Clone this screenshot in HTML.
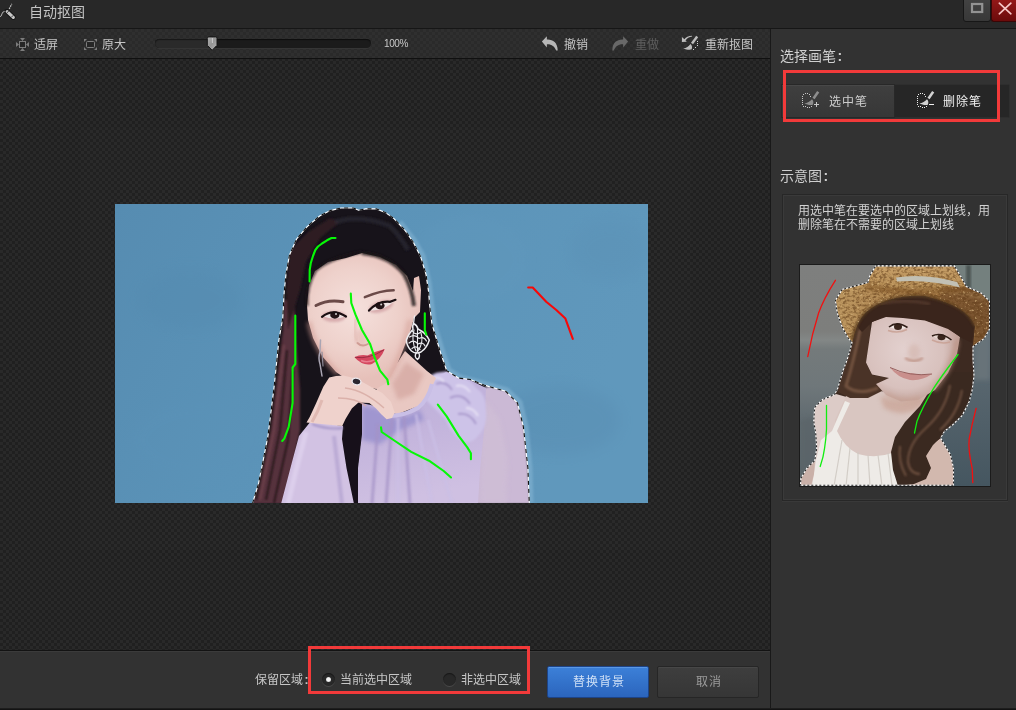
<!DOCTYPE html>
<html lang="zh-CN">
<head>
<meta charset="utf-8">
<title>自动抠图</title>
<style>
*{box-sizing:border-box;margin:0;padding:0}
html,body{width:1016px;height:710px;overflow:hidden;background:#2b2b2b}
body{position:relative;font-family:"Liberation Sans","Noto Sans CJK SC",sans-serif;color:#d0d0d0;font-size:12px}
.abs{position:absolute}
#wrap{position:absolute;left:0;top:0;width:1016px;height:710px;will-change:transform}
#title{left:0;top:0;width:1016px;height:29px;background:#282828;border-bottom:1px solid #161616}
#title .t{left:29px;top:2px;font-size:14px;color:#c4c4c4;line-height:20px;letter-spacing:0}
#tool{left:0;top:29px;width:770px;height:30px;border-bottom:1px solid #101010;
 background-color:#2a2a2a;
 background-image:conic-gradient(#2f2f2f 25%,#2a2a2a 0 50%,#2f2f2f 0 75%,#2a2a2a 0);background-size:6px 6px}
#canvas{left:0;top:59px;width:770px;height:591px;
 background-color:#222;
 background-image:conic-gradient(#292929 25%,#202020 0 50%,#292929 0 75%,#202020 0);background-size:6px 6px;background-position:3px 5px}
#inner{left:80px;top:128px;width:611px;height:422px;background:rgba(255,255,255,.009)}
#bottom{left:0;top:650px;width:770px;height:60px;background:#323232;border-top:1px solid #131313;box-shadow:inset 0 1px 0 #3b3b3b}
#side{left:770px;top:29px;width:246px;height:681px;background:#323232;border-left:1px solid #191919}
.tl{font-size:12px;color:#c8c8c8;line-height:16px;white-space:nowrap}

.ti{font-size:12px;line-height:16px;color:#c6c6c6;white-space:nowrap}
.dim{color:#5e5e5e}
#track{left:155px;top:39px;width:216px;height:9px;border-radius:5px;background:#1b1b1b;box-shadow:inset 0 1px 1px #0e0e0e,0 1px 0 #353535}
#trackL{left:155px;top:39px;width:57px;height:9px;border-radius:5px 0 0 5px;background:#2a2a2a;box-shadow:inset 0 1px 1px #171717}
#pct{left:384px;top:37px;letter-spacing:-.4px;font-size:10px;line-height:14px;color:#c8c8c8;font-family:"Liberation Sans",sans-serif}
#maxb{left:963px;top:-1px;width:28px;height:23px;background:linear-gradient(#424242,#383838);border:1px solid #171717;border-radius:0 0 3px 3px}
#clsb{left:991px;top:-1px;width:26px;height:23px;background:linear-gradient(#931818,#6b0b0b);border:1px solid #3a0606;border-right:0;border-radius:0 0 0 3px}
.col{font-weight:700;margin-left:1.500px;font-family:"Liberation Sans",sans-serif}
.h14{font-size:14px;line-height:18px;color:#cfcfcf;white-space:nowrap}
#redA{left:783px;top:70px;width:217px;height:52px;border:3px solid #f23a3a}
#redB{left:308px;top:646px;width:222px;height:48px;border:3px solid #f23a3a}
#btnSel{left:781px;top:84px;width:114px;height:34px;background:linear-gradient(#3f3f3f,#373737);border:1px solid #282828;box-shadow:inset 0 1px 0 #484848}
#btnDel{left:895px;top:84px;width:115px;height:34px;background:#262626;border:1px solid #2e2e2e;border-left:0;border-radius:0 2px 2px 0}
.bt{font-size:12px;letter-spacing:1px;line-height:16px;white-space:nowrap}
#demo{left:782px;top:194px;width:226px;height:307px;border:1px solid #272727;background:#323232;box-shadow:inset 0 0 0 1px #3a3a3a,0 1px 0 #393939}
#demoTxt{left:798px;top:204px;font-size:12px;line-height:14px;color:#d2d2d2;white-space:nowrap}
.radio{width:13px;height:13px;border-radius:50%;background:#282828;box-shadow:inset 0 1px 1px #161616,0 1px 0 #4a4a4a}
.radio i{position:absolute;left:4px;top:4px;width:5px;height:5px;border-radius:50%;background:radial-gradient(#f4f4f4 40%,#b0b0b0)}
#ok{left:547px;top:666px;width:102px;height:32px;background:linear-gradient(#3c80d8,#2b65bd);border:1px solid #1d4488;border-radius:2px;box-shadow:inset 0 1px 0 #5a97e4}
#cancel{left:657px;top:666px;width:102px;height:32px;background:linear-gradient(#3e3e3e,#363636);border:1px solid #262626;border-radius:2px;box-shadow:inset 0 1px 0 #474747}
#botline{left:0;top:708px;width:1016px;height:2px;background:linear-gradient(#222,#0e0e0e)}
</style>
</head>
<body>
<div id="wrap">
<div id="title" class="abs"><div class="abs t">自动抠图</div></div>
<div id="tool" class="abs"></div>
<div id="canvas" class="abs"></div>
<div id="inner" class="abs"></div>
<!--PHOTO1-->
<svg class="abs" style="left:115px;top:204px" width="533" height="299" viewBox="115 204 533 299">
<defs>
 <linearGradient id="p1bg" x1="0" x2="1" y1="0" y2="0.3"><stop offset="0" stop-color="#568cb1"/><stop offset=".45" stop-color="#5b93b8"/><stop offset="1" stop-color="#6098bc"/></linearGradient>
 <radialGradient id="p1skin" cx="355" cy="310" r="70" gradientUnits="userSpaceOnUse"><stop offset="0" stop-color="#f5e0dc"/><stop offset=".6" stop-color="#eed1cb"/><stop offset="1" stop-color="#e6c0b9"/></radialGradient>
 <linearGradient id="p1dress" x1="0" x2="0.2" y1="0" y2="1"><stop offset="0" stop-color="#bcaed9"/><stop offset=".5" stop-color="#c3b4dc"/><stop offset="1" stop-color="#cfc0e2"/></linearGradient>
 <filter id="b1" x="-20%" y="-20%" width="140%" height="140%"><feGaussianBlur stdDeviation="1"/></filter>
 <filter id="b2" x="-20%" y="-20%" width="140%" height="140%"><feGaussianBlur stdDeviation="2.2"/></filter>
 <filter id="b6" x="-30%" y="-30%" width="160%" height="160%"><feGaussianBlur stdDeviation="7"/></filter>
 <filter id="b05" x="-20%" y="-20%" width="140%" height="140%"><feGaussianBlur stdDeviation=".5"/></filter>
 <path id="p1out" d="M252.5 503.5 L258.5 483.7 L263.3 459.8 L268 435.8 L271 411.9 L274 388 L276.5 364 L278.9 340 L282.8 318 L284.200 292 L286 274.400 L289.500 255 L296.600 239 L307.200 226.600 L319.600 216 L330.200 210.600 L340.900 208 L353.300 208 L358.600 210.300 L365.700 208.900 L376.300 208.900 L385.200 212.400 L394 218.600 L404.700 230 L413.500 242.500 L420.600 256.700 L426 274.400 L428.600 292 L429.500 304 L431.9 324 L440.8 353.5 L443.7 361.8 L446.7 370.7 L458.5 378 L470.3 379.5 L485 385.4 L505.7 391.3 L517.5 403 L523.4 426.8 L527.9 468 L529.3 503.5 Z"/>
 <clipPath id="p1clip"><use href="#p1out"/></clipPath>
</defs>
<rect x="115" y="204" width="533" height="299" fill="url(#p1bg)"/>
<g filter="url(#b6)" opacity=".3">
 <ellipse cx="190" cy="300" rx="50" ry="30" fill="#5389ae"/>
 <ellipse cx="470" cy="260" rx="60" ry="45" fill="#6299bd"/>
 <ellipse cx="560" cy="420" rx="60" ry="35" fill="#5488ad"/>
 <ellipse cx="610" cy="250" rx="40" ry="30" fill="#5a8fb4"/>
 <ellipse cx="200" cy="440" rx="70" ry="40" fill="#5c93b8"/>
</g>
<!-- pale halo right of head -->
<path d="M400 222 L414 240 L423 256 L429 283 L434 324 L444 356 L449 370 L460 377 L486 384 L507 390 L520 402 L526 427 L530 468 L531 503" fill="none" stroke="#86b6d4" stroke-width="5" opacity=".55" filter="url(#b1)"/>
<g clip-path="url(#p1clip)">
 <use href="#p1out" fill="#17131a"/>
 <!-- reddish brown hair on left -->
 <g filter="url(#b1)">
  <path d="M284 300 L283 330 L279 360 L272 420 L262 470 L252 504 L284 504 L292 470 L300 430 L300 390 L296 340 L294 300 Z" fill="#57323c"/>
  <path d="M290 250 L286 290 L288 330 L300 290 L306 262 L320 238 L340 222 L330 218 L308 232 Z" fill="#2d1d23"/>
  <path d="M281 340 L270 430 L256 500 M287 350 L280 430 L266 500 M293 370 L288 440 L274 503" fill="none" stroke="#1f1217" stroke-width="2"/>
  <path d="M284 345 L274 430 L260 500" fill="none" stroke="#7a4a55" stroke-width="1.5" opacity=".8"/>
  <!-- top sheen -->
  <path d="M335 222 Q360 214 390 226 Q400 236 408 250" fill="none" stroke="#30303c" stroke-width="5" opacity=".55"/>
 </g>
 <!-- lace sleeve (right) -->
 <path d="M470 392 L490 386 L507 391 L518 403 L524 427 L528 468 L530 504 L474 504 L478 460 L480 430 Z" fill="#cbb9d5" filter="url(#b1)"/>
 <path d="M486 400 L500 420 L508 460 L506 504 L480 504 L482 440 Z" fill="#d0c0d6" opacity=".6" filter="url(#b2)"/>
 <!-- torso -->
 <path d="M357 504 L357.500 468 L361.500 434 L361.500 403 L375 406 L388 414 L405 412 L420 404 L432 380 L446 372 L470 380 L486 388 L484 430 L480 470 L478 504 Z" fill="url(#p1dress)"/>
 <path d="M362 440 L362 406 L376 408 L392 418 L408 416 L420 410 L424 420 L400 430 L380 444 Z" fill="#948dcc" opacity=".75" filter="url(#b2)"/>
 <!-- torso folds -->
 <g filter="url(#b1)" opacity=".75">
  <path d="M392 418 L386 504 M404 416 L410 504 M378 424 L372 504" fill="none" stroke="#a493c6" stroke-width="3"/>
  <path d="M398 418 L398 504 M416 414 L432 504 M428 420 L452 504" fill="none" stroke="#cbbfe6" stroke-width="3"/>
 </g>
 <!-- ruffle flower -->
 <g filter="url(#b1)">
  <path d="M424 384 Q430 372 442 372 Q452 370 458 378 Q470 378 476 388 Q486 394 486 410 Q488 426 478 436 Q470 446 460 440 Q450 432 446 420 Q436 410 428 402 Q420 396 424 384 Z" fill="#cdc3e8"/>
  <path d="M436 384 Q446 380 452 390 M450 398 Q462 392 470 404 M458 414 Q470 412 476 424" fill="none" stroke="#a898cc" stroke-width="2"/>
  <path d="M432 378 Q440 376 444 382 M456 386 Q464 384 470 392 M466 408 Q474 408 478 416" fill="none" stroke="#e6e0f4" stroke-width="2"/>
 </g>
 <!-- neck / chest skin -->
 <path d="M376 388 L398 362 L405 351 L416 361 L427 371 L436 378 L428 396 L418 406 L398 414 L388 412 L380 400 Z" fill="#e9c8c2"/>
 <path d="M392 384 L406 362 L424 374 L414 394 L398 400 Z" fill="#cf9f98" opacity=".6" filter="url(#b2)"/>
 <!-- neckline ruffle -->
 <path d="M388 416 Q404 416 418 408 Q428 400 432 384" fill="none" stroke="#c9bfe6" stroke-width="4" filter="url(#b05)"/>
 <!-- dark hair column between sleeve and torso -->
 <path d="M340 404 L362 402 L362 434 L358 468 L358 504 L353 504 L346 468 L342 439 L343 426 Z" fill="#17101a"/>
 <!-- left sleeve -->
 <path d="M311 421 L343 426 L342 439 L346.500 468 L354 504 L281 504 L292 462 L299 436 Z" fill="#d2c2e3"/>
 <g filter="url(#b1)">
  <path d="M306 432 L296 470 L288 504" fill="none" stroke="#dfd2ee" stroke-width="5" opacity=".8"/>
  <path d="M334 436 L338 470 L342 504" fill="none" stroke="#b5a5d2" stroke-width="4" opacity=".8"/>
  <path d="M312 424 Q328 430 343 428" fill="none" stroke="#a595c8" stroke-width="2"/>
 </g>
 <!-- face -->
 <path d="M307 305 L309 285 L315 271 L328 262 L346 258 L362 253 L380 257 L396 265 L407 276 L413 291 L414 278 L419 276 L421 290 L420 312 L414 318 L410 332 L403 350 L396 367 L388 382 L376 389 L352 383 L336 372 L322 356 L313 338 L308 320 Z" fill="url(#p1skin)"/>
 <!-- hair shadow on forehead right -->
 <path d="M362 253 Q390 256 404 274 Q412 288 414 306" fill="none" stroke="#1c1418" stroke-width="4" filter="url(#b1)" opacity=".8"/>
 <path d="M307 306 Q306 286 316 270 Q330 258 362 252" fill="none" stroke="#1c1418" stroke-width="3" filter="url(#b1)" opacity=".7"/>
 <!-- cheek shading -->
 <g filter="url(#b2)" opacity=".55">
  <path d="M309 322 Q314 350 338 374" fill="none" stroke="#d09a92" stroke-width="5"/>
  <path d="M410 320 Q404 352 388 380" fill="none" stroke="#d4a097" stroke-width="5"/>
  <ellipse cx="361" cy="338" rx="5" ry="9" fill="#e2b7af" transform="rotate(-12 361 338)"/>
 </g>
 <!-- hand -->
 <path d="M329.200 377.500 L336 376 L343.300 375.600 L356.300 378.500 L370.400 386.500 L382.300 393 L391 401.800 L394.700 412.600 L392 418 L386.600 419.200 L381 414 L375.800 408.300 L369.300 403 L358.500 402.400 L352 408.300 L345.500 419 L342.200 426 L306.500 422.400 L309.700 417 L316.200 402.900 L323.300 386.700 Z" fill="#efd2cc"/>
 <g filter="url(#b05)" opacity=".8">
  <path d="M345 388 Q364 390 384 408 M338 398 Q356 398 366 406" fill="none" stroke="#d6a9a2" stroke-width="1.5"/>
  <path d="M322 400 Q318 412 312 422" fill="none" stroke="#dcb3ac" stroke-width="3"/>
 </g>
 <!-- ring -->
 <ellipse cx="356.500" cy="381.500" rx="4.500" ry="3.300" fill="#2a2630" stroke="#ebe8ee" stroke-width="1.400" transform="rotate(15 356.500 381.500)"/>
 <!-- eyebrows -->
 <g fill="none" stroke-linecap="round">
  <path d="M316 305.500 Q328 299 343 301.800" stroke="#6b4a48" stroke-width="3"/>
  <path d="M364.800 297.200 Q380 290.500 393.700 290.200" stroke="#6b4a48" stroke-width="2.400"/>
 </g>
 <!-- eye shadow -->
 <g filter="url(#b1)" opacity=".55">
  <ellipse cx="334" cy="316.500" rx="12" ry="5.500" fill="#c48b92"/>
  <ellipse cx="381" cy="306.500" rx="12.500" ry="5.500" fill="#c48b92" transform="rotate(-18 381 306.500)"/>
 </g>
 <!-- eyes -->
 <path d="M323.500 316.500 Q333 309.500 345.500 316.500 Q334 320.500 323.500 316.500 Z" fill="#efe3e3"/>
 <ellipse cx="334.800" cy="315" rx="4.600" ry="3.700" fill="#241518"/>
 <path d="M322 316.800 Q333 308 346 316.500" fill="none" stroke="#1a0f12" stroke-width="2.200" stroke-linecap="round"/>
 <path d="M369.800 310.300 Q380 301 394 301.500 Q383 311.500 369.800 310.300 Z" fill="#efe3e3"/>
 <ellipse cx="380" cy="305.600" rx="4.600" ry="3.700" fill="#241518"/>
 <path d="M369 310.600 Q378 300.600 390 301.800 L395.500 299.800" fill="none" stroke="#1a0f12" stroke-width="2.200" stroke-linecap="round"/>
 <circle cx="336" cy="314" r="1" fill="#fff" opacity=".8"/><circle cx="381.200" cy="304.600" r="1" fill="#fff" opacity=".8"/>
 <!-- nose -->
 <path d="M357.500 343 Q362 347.500 368 344" fill="none" stroke="#cf9c94" stroke-width="2" stroke-linecap="round" filter="url(#b05)"/>
 <path d="M356 318 Q353 332 357 342" fill="none" stroke="#e3bcb5" stroke-width="3" opacity=".7" filter="url(#b1)"/>
 <!-- lips -->
 <path d="M354.400 357.200 Q361 354 367.500 355.600 Q376 351 384.800 349 Q381 359 372 364 Q363 366.500 354.400 357.200 Z" fill="#d5475f"/>
 <path d="M355 357.300 Q369 359.500 384 349.800" fill="none" stroke="#9a2c42" stroke-width="1"/>
 <path d="M361 360.500 Q368 363.500 376 359" fill="none" stroke="#ee8a9a" stroke-width="1.500" opacity=".8" filter="url(#b05)"/>
 <!-- earrings -->
 <g fill="none" stroke="#ececf0" stroke-linecap="round" stroke-linejoin="round">
  <path d="M414.500 316 L413.500 323.500" stroke-width="1.300"/>
  <path d="M413.500 323.500 Q417 325 418 329 Q426 333 429.300 340 Q427 348 421 352 Q416 354.500 411.500 351 Q406.500 346 406.400 340 Q409 333 413 329.500 Q412 326 413.500 323.500 Z" stroke-width="1.500"/>
  <path d="M412 331 Q416 336 421 332 M409.500 337 Q415 333.500 419 338.500 Q424 336 426.500 341 M409 343 Q414 339 418 344 Q423 341.500 425 346 M412 348.500 Q416 345 420 349.500" stroke-width="1.200"/>
  <path d="M414 330 Q411 340 416 351 M421 333 Q424 342 418 351 M417.500 328 V352" stroke-width="1.100"/>
  <path d="M416.500 352.500 Q413.500 356.500 417.500 359.500 Q421 356.500 418.500 352.500" stroke-width="1.400"/>
  <path d="M320.500 340 L320 352 Q318 358 320 364 L322 376" stroke="#aaa5b3" stroke-width="1.500"/>
  <path d="M322 352 L323 366" stroke="#8f8a98" stroke-width="1.200"/>
 </g>
</g>
<!-- marching ants -->
<use href="#p1out" fill="none" stroke="#ffffff" stroke-width="1.100"/>
<use href="#p1out" fill="none" stroke="#101010" stroke-width="1.100" stroke-dasharray="4 4"/>
<!-- strokes -->
<g fill="none" stroke="#06f806" stroke-width="2.100" stroke-linejoin="round" stroke-linecap="round">
 <path d="M335.500 238 L331.500 238 L327 240.300 L322 243.500 L318 246.500 L315.300 250 L313 256 L310.800 263 L309.700 270 L309.600 281.500"/>
 <path d="M350.800 293.600 L351.300 303 L355.400 314.400 L362 330 L370 343.700 L374.500 357.200 L380 370.700 L387.400 379.700 L388.300 384.200"/>
 <path d="M295.300 315.500 L295.300 364 L292.600 367.500 L292.600 403 L288.700 426.800 L284.300 438.600 L282.200 441"/>
 <path d="M424.800 313.200 L424.800 330 L426.300 334.600"/>
 <path d="M381 427.400 L381.700 432 L393.500 440 L411.200 451.900 L429 460.700 L443.700 471 L451 477.500"/>
 <path d="M437.800 404.600 L446.700 416.400 L458.500 435.600 L467.300 447.400 L470.900 453.300 L470.900 459.200"/>
</g>
<path d="M528.200 287.500 L532.700 287.500 L546.200 301.700 L556.300 310 L565.400 318.600 L572.800 338.900" fill="none" stroke="#f80808" stroke-width="2.100" stroke-linejoin="round" stroke-linecap="round"/>
</svg>
<!--/PHOTO1-->
<div id="bottom" class="abs"></div>
<div id="side" class="abs"></div>

<!-- title buttons -->
<div id="maxb" class="abs"></div>
<div id="clsb" class="abs"></div>
<svg class="abs" style="left:964px;top:0" width="52" height="22" viewBox="964 0 52 22">
 <rect x="972" y="4" width="10.2" height="8" fill="none" stroke="#939393" stroke-width="2.2"/>
 <path d="M999.3 3.2 L1010.9 13.8 M1010.9 3.2 L999.3 13.8" stroke="#f6c6c6" stroke-width="1.7" stroke-linecap="round"/>
</svg>
<!-- toolbar -->
<div class="abs ti" style="left:34px;top:37px">适屏</div>
<div class="abs ti" style="left:102px;top:37px">原大</div>
<div id="track" class="abs"></div><div id="trackL" class="abs"></div>
<div id="pct" class="abs">100%</div>
<div class="abs ti" style="left:564px;top:37px">撤销</div>
<div class="abs ti dim" style="left:635px;top:37px">重做</div>
<div class="abs ti" style="left:705px;top:37px">重新抠图</div>
<!-- side -->
<div class="abs h14" style="left:780px;top:47px">选择画笔<b class="col">:</b></div>
<div id="btnSel" class="abs"></div>
<div id="btnDel" class="abs"></div>
<div class="abs bt" style="left:829px;top:94px;color:#cdcdcd">选中笔</div>
<div class="abs bt" style="left:943px;top:94px;color:#f0f0f0">删除笔</div>
<div id="redA" class="abs"></div>
<div class="abs h14" style="left:780px;top:167px">示意图<b class="col">:</b></div>
<div id="demo" class="abs"></div>
<!--PHOTO2-->
<svg class="abs" style="left:800px;top:265px;box-shadow:0 0 0 1px #1b1b1b" width="190" height="221" viewBox="800 265 190 221">
<defs>
 <linearGradient id="p2bg" x1="0" x2="0" y1="0" y2="1"><stop offset="0" stop-color="#7e7f7e"/><stop offset=".3" stop-color="#7d7e7c"/><stop offset=".34" stop-color="#838786"/><stop offset=".38" stop-color="#747a7b"/><stop offset=".55" stop-color="#6f777a"/><stop offset=".68" stop-color="#626c71"/><stop offset="1" stop-color="#5a6469"/></linearGradient>
 <linearGradient id="p2hat" x1="0" x2="0" y1="0" y2="1"><stop offset="0" stop-color="#c79f68"/><stop offset="1" stop-color="#b08850"/></linearGradient>
 <linearGradient id="p2brim" x1="835" x2="990" y1="0" y2="0" gradientUnits="userSpaceOnUse"><stop offset="0" stop-color="#bd9861"/><stop offset=".35" stop-color="#ad8450"/><stop offset=".7" stop-color="#9a6f3e"/><stop offset="1" stop-color="#8a6238"/></linearGradient>
 <radialGradient id="p2skin" cx="905" cy="350" r="55" gradientUnits="userSpaceOnUse"><stop offset="0" stop-color="#e3d1cf"/><stop offset=".7" stop-color="#d8c1bd"/><stop offset="1" stop-color="#c0a097"/></radialGradient>
 <filter id="straw" color-interpolation-filters="sRGB" x="0" y="0" width="100%" height="100%"><feTurbulence type="fractalNoise" baseFrequency=".3 .42" numOctaves="2" seed="4" result="n"/><feColorMatrix in="n" type="matrix" values="0 0 0 0 .38  0 0 0 0 .24  0 0 0 0 .10  3 3 0 0 -2.75" result="sp"/><feComposite in="sp" in2="SourceGraphic" operator="in"/></filter>
 <filter id="strawL" color-interpolation-filters="sRGB" x="0" y="0" width="100%" height="100%"><feTurbulence type="fractalNoise" baseFrequency=".35 .5" numOctaves="2" seed="11" result="n"/><feColorMatrix in="n" type="matrix" values="0 0 0 0 .90  0 0 0 0 .78  0 0 0 0 .56  0 3 3 0 -3.5" result="sp"/><feComposite in="sp" in2="SourceGraphic" operator="in"/></filter>
 <filter id="c1" x="-20%" y="-20%" width="140%" height="140%"><feGaussianBlur stdDeviation=".8"/></filter>
 <filter id="c2" x="-20%" y="-20%" width="140%" height="140%"><feGaussianBlur stdDeviation="2"/></filter>
 <filter id="c5" x="-30%" y="-30%" width="160%" height="160%"><feGaussianBlur stdDeviation="5"/></filter>
 <path id="p2out" d="M875.700 265.900 L954.400 265.900 L960.400 275.700 L966.300 286.600 L982 293.500 L989.500 301.300 L989.500 328.900 L984 338.700 L973 346.600 L973 358.400 L974 375.900 L972.200 389.700 L969.200 401.500 L962.300 415.300 L952.500 425 L944.600 431 L940.700 437.900 L944.600 444.800 L950.500 454.600 L953.500 468.400 L953.500 485.300 L800.500 485.300 L800.900 478.300 L806.800 468.400 L814.700 460.600 L816.700 448.700 L815.700 433 L813.700 421.200 L814.700 407.400 L822.600 399.500 L834.400 394.600 L837.300 389.700 L840.300 379.800 L843.200 370 L846.200 362.400 L850 350.600 L852 342.700 L848 337.800 L842.200 327 L837.300 313 L835.400 300.400 L842.200 289.500 L867.800 282.600 L869.800 275.700 Z"/>
 <clipPath id="p2clip"><use href="#p2out"/></clipPath>
</defs>
<rect x="800" y="265" width="190" height="221" fill="url(#p2bg)"/>
<!-- right bg darker -->
<linearGradient id="p2bgr" x1="0" x2="0" y1="0" y2="1"><stop offset="0" stop-color="#66727a"/><stop offset=".4" stop-color="#5d6a72"/><stop offset="1" stop-color="#455660"/></linearGradient><rect x="940" y="265" width="50" height="221" fill="url(#p2bgr)"/>
<path d="M950 265 L990 265 L990 305 L975 292 L962 278 Z" fill="#74807e"/>
<rect x="966" y="265" width="5" height="30" fill="#4e5755" filter="url(#c1)"/>
<path d="M975 344 L990 330 L990 380 L974 380 Z" fill="#687379" filter="url(#c2)"/>
<path d="M800 420 Q830 410 840 430 L830 486 L800 486 Z" fill="#5a6468" filter="url(#c2)" opacity=".7"/>
<g clip-path="url(#p2clip)">
 <!-- hair base -->
 <use href="#p2out" fill="#3d2a21"/>
 <!-- left shoulder / arm skin -->
 <path d="M800 486 L801 478 L807 468 L815 460 L817 448 L816 433 L814 421 L815 407 L823 399 L836 394 L850 398 L856 410 L850 440 L840 486 Z" fill="#dccbc7"/>
 <!-- chest / neck skin -->
 <path d="M846 396 L870 388 L900 396 L930 392 L925 420 L905 440 L895 460 L858 460 L846 452 L837 438 L835 420 Z" fill="#d9c6c1"/>
 <path d="M880 396 Q905 408 930 392 L925 404 Q905 420 884 408 Z" fill="#c9a394" opacity=".7" filter="url(#c2)"/>
 <!-- right shoulder skin -->
 <path d="M921 452 L941 438 L945 445 L951 455 L954 468 L954 486 L900 486 L905 466 Z" fill="#d2b8ae"/>
 <!-- dress -->
 <path d="M845 401 L850 403 L837 431 Q844 447 858 454 Q876 459 892 453 L896 470 L898 486 L812 486 L816 460 L821 440 L832 431 Z" fill="#eeebe7"/>
 <path d="M800 486 L801 478 L807 468 L815 461 L814 474 L811 486 Z" fill="#c9b0a8"/>
 <g fill="none" stroke="#cfcac3" stroke-width="1.200" opacity=".9">
  <path d="M842 440 L834 486 M850 448 L846 486 M858 452 L858 486 M868 455 L870 486 M878 455 L882 486 M888 453 L892 486"/>
 </g>
 <!-- right hair mass with waves -->
 <path d="M935 372 L974 372 L972 390 L969 402 L962 415 L952 425 L944 431 L940 438 L933 445 L926 456 L931 468 L926 479 L914 484 L898 486 L893 470 L891 452 L895 437 L905 422 L920 406 L930 390 Z" fill="#3a2920"/>
 <g fill="none" stroke="#7b5a47" stroke-width="2" opacity=".8" filter="url(#c1)">
  <path d="M950 385 Q946 410 926 428 Q908 444 908 462 Q910 474 920 474"/>
  <path d="M962 390 Q958 414 940 430"/>
  <path d="M900 446 Q898 462 906 476"/>
 </g>
 <!-- left hair -->
 <path d="M856 322 L868 318 L872 336 L868 350 L866 363 L872 375 L889 378 L884 390 L868 398 L850 398 L838 392 L840 380 L846 362 L852 343 Z" fill="#4a3327"/>
 <path d="M860 330 Q854 360 846 386 Q858 396 878 388" fill="none" stroke="#86624c" stroke-width="3" opacity=".7" filter="url(#c1)"/>
 <!-- face -->
 <path d="M872 322 L886 316 L903 317 L925 320 L948 328 L960 337 L957 354 L948 373 L935 390 L918 400 L901 401.500 L886 395 L876 384 L889 378 L872 374.500 L866 362.500 L868 349 Z" fill="url(#p2skin)"/>
 <!-- face shading -->
 <g filter="url(#c2)" opacity=".6">
  <path d="M957 340 Q954 366 934 390" fill="none" stroke="#b88c7c" stroke-width="5"/>
  <path d="M886 394 Q902 404 920 398" fill="none" stroke="#c59c8c" stroke-width="4"/>
  <ellipse cx="914" cy="352" rx="6" ry="8" fill="#d2b4ab"/>
 </g>
 <!-- eyes -->
 <path d="M889.500 327 Q897 321.500 906.500 327.500 Q898 331.500 889.500 327 Z" fill="#efe6e2"/>
 <ellipse cx="898" cy="326.800" rx="4" ry="3.300" fill="#3a261d"/>
 <path d="M889 327 Q897 320.500 907.500 327.500" fill="none" stroke="#2f1e17" stroke-width="1.600"/>
 <path d="M932.500 336 Q941 332.500 950.500 339.500 Q941 342 932.500 336 Z" fill="#e6d8d2"/>
 <ellipse cx="941.500" cy="337.300" rx="4" ry="3" fill="#3a261d"/>
 <path d="M932 336 Q941 331.500 951.500 340" fill="none" stroke="#2f1e17" stroke-width="1.600"/>
 <path d="M888 330.500 Q898 334 907 329.500 M932 340 Q941 344.500 950 342" fill="none" stroke="#c79e90" stroke-width="1.500" opacity=".8"/>
 <!-- nose -->
 <path d="M905 358 Q914 364 923 358" fill="none" stroke="#b98a7c" stroke-width="2" filter="url(#c1)"/>
 <!-- mouth -->
 <path d="M890 367.500 Q900 374 911 373 Q922 376 932 374 Q922 381 910 380 Q898 378 890 367.500 Z" fill="#c98f8c"/>
 <path d="M890 367.500 Q910 377 932 374" fill="none" stroke="#96605e" stroke-width="1"/>
 <!-- hair under hat + bangs -->
 <path d="M855 324 Q868 306 889 300 Q924 292 965 306 L975 324 L974 344 L962 338 L948 329 L925 320.500 L903 318 L886 317 L872 322 L862 332 Z" fill="#3a251c"/>
 <path d="M880 304 Q905 298 930 304" fill="none" stroke="#5c4032" stroke-width="3" opacity=".7" filter="url(#c1)"/>
 <!-- hat crown -->
 <path d="M875.700 265 L954.400 265 L960.400 275.700 L966.300 286.600 L960 296 L890 292 L867.800 284 L869.800 275.700 Z" fill="url(#p2hat)"/>
 <!-- band -->
 
 <!-- brim -->
 <path d="M835.400 300.400 L842.200 289.500 L867.800 282.600 Q910 290 966.300 286.600 L982 293.500 L990 301.300 L990 328.900 L984 338.700 L973 346.600 L975 326 Q968 306 925 296 Q888 294 866 312 Q856 322 852 343 L848 337.800 L842.200 327 L837.300 313 Z" fill="url(#p2brim)"/>
 <path d="M842 292 Q880 282 920 290 Q960 292 986 298" fill="none" stroke="#c6a068" stroke-width="4" opacity=".8" filter="url(#c1)"/>
 <path d="M852 340 Q856 320 868 310 Q890 294 925 296 Q966 304 975 326" fill="none" stroke="#5c3f24" stroke-width="3" opacity=".8" filter="url(#c1)"/>
 <path d="M940 288 L966 287 L982 293.500 L990 301 L990 329 L984 339 L973 347 L975 326 Q970 308 940 299 Z" fill="#6e4a2a" opacity=".55" filter="url(#c1)"/>
 <!-- hat texture -->
 <path d="M875.700 265 L954.400 265 L960.400 275.700 L966.300 286.600 L982 293.500 L990 301.300 L990 328.900 L984 338.700 L973 346.600 L975 326 Q968 306 925 296 Q888 294 866 312 Q856 322 852 343 L848 337.800 L842.200 327 L837.300 313 L835.400 300.400 L842.200 289.500 L867.800 282.600 L869.800 275.700 Z" fill="#000" filter="url(#straw)" opacity=".55"/>
 <path d="M868 283 Q910 291 966 287 L972 291 Q915 298 862 289 Z" fill="#7f5426" opacity=".55" filter="url(#c1)"/>
 <path d="M875.700 265 L954.400 265 L960.400 275.700 L966.300 286.600 L982 293.500 L990 301.300 L990 328.900 L984 338.700 L973 346.600 L975 326 Q968 306 925 296 Q888 294 866 312 Q856 322 852 343 L848 337.800 L842.200 327 L837.300 313 L835.400 300.400 L842.200 289.500 L867.800 282.600 L869.800 275.700 Z" fill="#000" filter="url(#strawL)" opacity=".6"/>
 <path d="M896 277.500 Q925 273 957 282 L960 287.500 Q928 279 897 281.500 Z" fill="#c2c0b4"/>
</g>
<!-- ants -->
<use href="#p2out" fill="none" stroke="#ffffff" stroke-width="1.100"/>
<use href="#p2out" fill="none" stroke="#222" stroke-width="1.100" stroke-dasharray="2 2"/>
<!-- strokes -->
<g fill="none" stroke-width="1.300" stroke-linecap="round" stroke-linejoin="round">
 <path d="M826.500 405.400 L826.500 429 Q826 440 824.500 448.700 Q823.500 457 820.200 466.500" stroke="#10ee10"/>
 <path d="M958 354.500 Q940 378 932.800 389.700 Q922 408 917 421.200 L914.500 433" stroke="#10ee10"/>
 <path d="M835.400 280.300 Q824 298 818.600 313 Q812 334 807.800 356.500" stroke="#f21010"/>
 <path d="M976.100 408.400 Q972 424 969.200 438.900 Q968 450 972.200 468.400 L972.800 482.600" stroke="#f21010"/>
</g>
</svg>
<!--/PHOTO2-->
<div id="demoTxt" class="abs">用选中笔在要选中的区域上划线，用<br>删除笔在不需要的区域上划线</div>
<!-- bottom -->
<div class="abs ti" style="left:255px;top:672px">保留区域<b class="col">:</b></div>
<div class="abs radio" style="left:322px;top:673px"><i></i></div>
<div class="abs ti" style="left:340px;top:672px">当前选中区域</div>
<div class="abs radio" style="left:443px;top:673px"></div>
<div class="abs ti" style="left:461px;top:672px">非选中区域</div>
<div id="redB" class="abs"></div>
<div id="ok" class="abs"></div>
<div class="abs bt" style="left:573px;top:674px;color:#cfe0f6">替换背景</div>
<div id="cancel" class="abs"></div>
<div class="abs bt" style="left:696px;top:674px;color:#9c9c9c">取消</div>

<svg class="abs" style="left:0;top:0" width="1016" height="125" viewBox="0 0 1016 125">
 <!-- title icon -->
 <path d="M0 16.7 Q1.6 16.4 1.9 14 Q2.3 11.6 4.8 11.4" stroke="#b4b4b4" stroke-width="1" fill="none"/>
 <path d="M9.2 8.9 L11.8 3.9" stroke="#cfcfcf" stroke-width="1.2" stroke-dasharray="1.6 .9" fill="none"/>
 <path d="M5 9.2 L8 11.2 L6.6 12.4 Z" fill="#c4c4c4" stroke="#141414" stroke-width=".8"/>
 <path d="M7.2 11.6 L13.3 17.3" stroke="#141414" stroke-width="5" stroke-linecap="round"/>
 <path d="M7.2 11.6 L13.3 17.3" stroke="#c6c6c6" stroke-width="3.2" stroke-linecap="round"/>
 <path d="M6.6 13.2 L9 10.8 M11.2 17.4 L13.4 15.2" stroke="#1a1a1a" stroke-width=".8"/>
 <!-- fit icon -->
 <g fill="#7c7c7c">
  <rect x="19.5" y="41.5" width="6" height="6" fill="#262626" stroke="#7c7c7c" stroke-width="1"/>
  <path d="M20 38 H25 L22.5 41 Z M20 51 H25 L22.5 48 Z M16 42 V47 L19 44.5 Z M29 42 V47 L26 44.5 Z"/>
 </g>
 <!-- original icon -->
 <g fill="#7c7c7c">
  <rect x="86.5" y="41.5" width="8" height="6" rx="1" fill="#262626" stroke="#7e7e7e" stroke-width="1"/>
  <path d="M84 39 H87 L84 42 Z M97 39 H94 L97 42 Z M84 50 H87 L84 47 Z M97 50 H94 L97 47 Z"/>
 </g>
 <!-- slider thumb -->
 <path d="M207.3 38.300 Q207.3 36.900 208.800 36.900 L215.600 36.900 Q217 36.900 217 38.300 L217 45.300 L212.150 50.300 L207.300 45.300 Z" fill="url(#thg)" stroke="#151515" stroke-width="1"/>
 <path d="M212.4 38 V43" stroke="#d8d8d8" stroke-width="1" opacity=".8"/>
 <!-- undo / redo -->
 <path d="M541.9 41.6 L546.8 36.3 L546.9 39.6 C552.5 39.2 557.6 42.5 557.7 50.4 L556.2 50.6 C554.6 46.2 551.6 44 546.9 44.2 L546.8 47.4 Z" fill="#b6b6b6"/>
 <path d="M541.9 41.6 L546.8 36.3 L546.9 39.6 C552.5 39.2 557.6 42.5 557.7 50.4 L556.2 50.6 C554.6 46.2 551.6 44 546.9 44.2 L546.8 47.4 Z" fill="#686868" transform="translate(1170 0) scale(-1 1)"/>
 <!-- rematting icon -->
 <g fill="#bdbdbd">
  <path d="M681.9 37.1 L681.9 41.9 L686.9 41.7 L685.5 40.4 C687 38.4 689 37 692.2 36.6 L692 35.8 C688.5 36 686 37.3 684.4 39.2 Z"/>
  <path d="M692 43.4 L697.2 36.6" stroke="#bdbdbd" stroke-width="2.5" fill="none"/>
  <path d="M690.4 44 C692.2 45.2 692.6 48 691.4 49.6 C688.3 50 686 49.4 683.2 48.5 C686.4 48 688.6 46.4 690.4 44 Z"/>
  <g shape-rendering="crispEdges" fill="#d0d0d0"><rect x="697" y="41" width="1" height="1"/><rect x="697" y="43" width="1" height="1"/><rect x="697" y="45" width="1" height="1"/><rect x="695" y="47" width="1" height="1"/><rect x="693" y="49" width="1" height="1"/></g>
 </g>
 <g transform="translate(0 0)"><g fill="#c8c8c8" shape-rendering="crispEdges"><rect x="803" y="94" width="1" height="1"/><rect x="805" y="93" width="1" height="1"/><rect x="807" y="93" width="1" height="1"/><rect x="809" y="94" width="1" height="1"/><rect x="810" y="96" width="1" height="1"/><rect x="802" y="96" width="1" height="1"/><rect x="802" y="98" width="1" height="1"/><rect x="802" y="100" width="1" height="1"/><rect x="802" y="102" width="1" height="1"/><rect x="802" y="104" width="1" height="1"/><rect x="803" y="106" width="1" height="1"/><rect x="805" y="106" width="1" height="1"/><rect x="807" y="107" width="1" height="1"/><rect x="809" y="107" width="1" height="1"/><rect x="811" y="106" width="1" height="1"/></g><path d="M813.5 98.4 L818.2 91.8" stroke="#8e8e8e" stroke-width="2.6" stroke-linecap="butt" fill="none"/><path d="M812 99.2 C813.6 100.4 813.8 103.4 812.6 104.9 C809.5 105.3 807 104.6 804.3 103.5 C807.5 103 810 101.6 812 99.2 Z" fill="#8e8e8e"/><path d="M814 104.5 H819 M816.5 102 V107" stroke="#c8c8c8" stroke-width="1" shape-rendering="crispEdges"/></g>
 <g transform="translate(115 0)"><g fill="#f0f0f0" shape-rendering="crispEdges"><rect x="803" y="94" width="1" height="1"/><rect x="805" y="93" width="1" height="1"/><rect x="807" y="93" width="1" height="1"/><rect x="809" y="94" width="1" height="1"/><rect x="810" y="96" width="1" height="1"/><rect x="802" y="96" width="1" height="1"/><rect x="802" y="98" width="1" height="1"/><rect x="802" y="100" width="1" height="1"/><rect x="802" y="102" width="1" height="1"/><rect x="802" y="104" width="1" height="1"/><rect x="803" y="106" width="1" height="1"/><rect x="805" y="106" width="1" height="1"/><rect x="807" y="107" width="1" height="1"/><rect x="809" y="107" width="1" height="1"/><rect x="811" y="106" width="1" height="1"/></g><path d="M813.5 98.4 L818.2 91.8" stroke="#d2d2d2" stroke-width="2.6" stroke-linecap="butt" fill="none"/><path d="M812 99.2 C813.6 100.4 813.8 103.4 812.6 104.9 C809.5 105.3 807 104.6 804.3 103.5 C807.5 103 810 101.6 812 99.2 Z" fill="#d2d2d2"/><path d="M814 104.5 H819" stroke="#f0f0f0" stroke-width="1" shape-rendering="crispEdges"/></g>
 <defs><linearGradient id="thg" x1="0" x2="1" y1="0" y2="1"><stop offset="0" stop-color="#b0b0b0"/><stop offset=".5" stop-color="#959595"/><stop offset="1" stop-color="#b8b8b8"/></linearGradient></defs>
</svg>
<div id="botline" class="abs"></div>
</div>
</body>
</html>
